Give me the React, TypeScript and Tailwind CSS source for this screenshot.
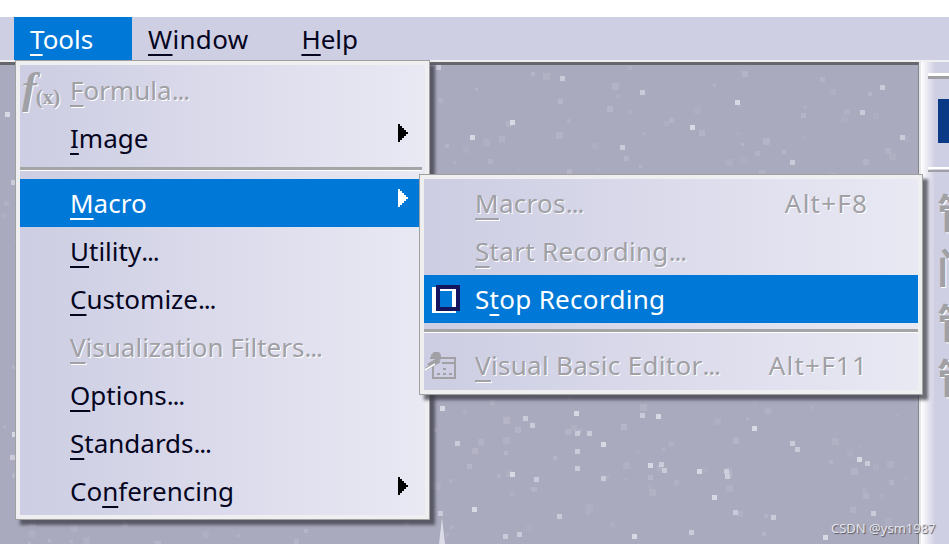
const FONT = "font-['Noto_Sans','Open_Sans',sans-serif]";
const DISABLED = "text-[#a0a0a5] [text-shadow:1px_1px_0_#ffffff]";

// hand picked from the reference, the rest of the speckle is seeded below
const BRIGHT_STARS = [
  [440, 406], [523, 416], [530, 423], [574, 411], [640, 413], [587, 431], [656, 414], [455, 441], [575, 431],
  [601, 442], [575, 449], [575, 466], [510, 472], [534, 477], [601, 476], [648, 463], [659, 462], [662, 468],
  [697, 469], [724, 469], [725, 474], [712, 495], [733, 510], [771, 515], [472, 507], [557, 514], [438, 511],
  [752, 426], [790, 441], [795, 447], [857, 457], [865, 461], [503, 534], [632, 534], [517, 532], [689, 530],
  [823, 535], [871, 511], [30, 105], [5, 112], [11, 180], [10, 455], [12, 432], [436, 65], [640, 90], [690, 125],
  [790, 160], [860, 110], [510, 120], [560, 76], [880, 85], [735, 100], [620, 145], [900, 135], [470, 135],
];

function makeSpeckle(count: number) {
  let seed = 1987;
  const next = () => {
    seed = (seed * 16807) % 2147483647;
    return seed / 2147483647;
  };
  return Array.from({ length: count }, () => ({
    x: Math.floor(next() * 918),
    y: Math.floor(next() * 480) + 65,
    w: 3 + Math.floor(next() * 5),
    o: 0.04 + next() * 0.1,
  }));
}

function Mnemonic({ text, at }: { text: string; at: number }) {
  const dots = text.endsWith("...");
  const body = dots ? text.slice(0, -3) : text;
  return (
    <>
      {body.slice(0, at)}
      <span className="underline decoration-2 underline-offset-[5px] [text-decoration-skip-ink:none]">{body[at]}</span>
      {body.slice(at + 1)}
      {dots && <span className="tracking-[-1.2px]">...</span>}
    </>
  );
}

function Arrow({ white }: { white?: boolean }) {
  return (
    <svg width="10" height="18" viewBox="0 0 10 18" className="absolute left-[378px] top-[10px]">
      <path d="M0 0h2v2h2v2h2v2h2v2h2v2h-2v2h-2v2h-2v2h-2v2h-2z" fill={white ? "#ffffff" : "#000000"} />
    </svg>
  );
}

function FormulaIcon() {
  return (
    <div className={`absolute left-[2px] top-[2px] flex items-end font-['Liberation_Serif',serif] italic font-bold ${DISABLED}`}>
      <span className="text-[44px] leading-[42px]">f</span>
      <span className="ml-[-1px] mb-[1px] text-[21px] leading-[24px] not-italic">(x)</span>
    </div>
  );
}

function StopIcon() {
  return (
    <svg width="30" height="30" viewBox="0 0 30 30" className="absolute left-[8px] top-[10px]">
      <rect x="2" y="4" width="20" height="22" fill="none" stroke="#ffffff" strokeWidth="4" />
      <rect x="6" y="2" width="20" height="22" fill="none" stroke="#14145f" strokeWidth="4" />
    </svg>
  );
}

function VbaIcon() {
  return (
    <svg width="34" height="34" viewBox="0 0 34 34" className="absolute left-0 top-[6px]">
      <path d="M7 11v-3l3-3h5l2 3v2" fill="#a0a0a5" />
      <path d="M6 11h25v20H9V19" fill="none" stroke="#a0a0a5" strokeWidth="2" />
      <path d="M4 18l12-7M2 22l14-8" stroke="#a0a0a5" strokeWidth="3" />
      <path d="M1 23l10-6" stroke="#ffffff" strokeWidth="1.5" />
      <path d="M18 16h12" stroke="#a0a0a5" strokeWidth="2" />
      <path d="M13 28h3v-2h-3zM19 28h3v-2h-3zM25 28h3v-2h-3zM19 23h3v-2h-3z" fill="#a0a0a5" />
    </svg>
  );
}

type Item = {
  label: string;
  at: number;
  disabled?: boolean;
  active?: boolean;
  arrow?: boolean;
  shortcut?: string;
  icon?: React.ReactNode;
};

function Row({ item, sub }: { item: Item; sub?: boolean }) {
  const tone = item.active ? "bg-[#0078d7] text-white" : item.disabled ? DISABLED : "text-[#05051f]";
  const inset = sub ? "pl-[51px] tracking-[0.3px]" : "pl-[50px]";
  return (
    <div className={`relative flex h-12 items-center justify-between pr-[50px] pb-[1px] ${inset} ${tone}`}>
      {item.icon}
      <span>
        <Mnemonic text={item.label} at={item.at} />
      </span>
      {item.shortcut && <span className="tracking-[1.2px]">{item.shortcut}</span>}
      {item.arrow && <Arrow white={item.active} />}
    </div>
  );
}

function Separator({ className }: { className: string }) {
  return (
    <div className={`flex items-start ${className}`}>
      <div className="h-[4px] w-full border-b border-white bg-[#a5a5a8]" />
    </div>
  );
}

function MenuBox({ className, children }: { className: string; children: React.ReactNode }) {
  return (
    <div className={`absolute border border-[#a0a0a0] shadow-[5px_5px_3px_rgba(60,60,72,0.75)] ${className}`}>
      <div className="h-full border-4 border-[#efeff1] bg-gradient-to-r from-[#cdcde3] to-[#e9e9f4] text-[26px] leading-none">
        {children}
      </div>
    </div>
  );
}

const topItems: Item[] = [
  { label: "Formula...", at: 0, disabled: true, icon: <FormulaIcon /> },
  { label: "Image", at: 0, arrow: true },
];
const mainItems: Item[] = [
  { label: "Macro", at: 0, active: true, arrow: true },
  { label: "Utility...", at: 0 },
  { label: "Customize...", at: 0 },
  { label: "Visualization Filters...", at: 0, disabled: true },
  { label: "Options...", at: 0 },
  { label: "Standards...", at: 0 },
  { label: "Conferencing", at: 2, arrow: true },
];
const macroItems: Item[] = [
  { label: "Macros...", at: 0, disabled: true, shortcut: "Alt+F8" },
  { label: "Start Recording...", at: 0, disabled: true },
  { label: "Stop Recording", at: 1, active: true, icon: <StopIcon /> },
];

export default function App() {
  const speckle = makeSpeckle(520);
  return (
    <div className={`relative flex h-[544px] w-[949px] flex-col overflow-hidden bg-white ${FONT}`}>
      <div className="h-[17px] shrink-0" />

      <div className="flex h-[43px] shrink-0 bg-[#cfcfe4] pl-[14px] text-[26px] leading-none text-[#05051f]">
        <div className="flex w-[118px] items-center bg-[#0078d7] pl-4 text-white">
          <span><Mnemonic text="Tools" at={0} /></span>
        </div>
        <div className="flex items-center pl-4 tracking-[0.3px]">
          <span><Mnemonic text="Window" at={0} /></span>
        </div>
        <div className="flex items-center pl-[53px]">
          <span><Mnemonic text="Help" at={0} /></span>
        </div>
      </div>

      <div className="flex min-h-0 flex-1 border-t-2 border-[#f0f0f2]">
        <div className="relative w-[919px] border-t-[3px] border-r border-t-[#66666e] border-r-[#85858f] bg-[#aaaabf]">
          <svg width="918" height="482" viewBox="0 65 918 482" className="absolute inset-0">
            {speckle.map((s, i) => (
              <rect key={i} x={s.x} y={s.y} width={s.w} height={s.w} fill="#ffffff" opacity={s.o} />
            ))}
            {BRIGHT_STARS.map(([x, y], i) => (
              <rect key={i} x={x} y={y} width="5" height="5" fill="#e4e4ee" opacity={i % 3 === 0 ? 0.8 : 0.55} />
            ))}
            <path d="M442 518l3 26h-6z" fill="#e8e8f2" opacity="0.8" />
          </svg>
        </div>

        <div className="relative flex-1 overflow-hidden border-l-2 border-[#e6e6e8] bg-gradient-to-r from-white to-[#cfcfe4] to-50%">
          <div className="ml-[7px] mt-[11px] h-[6px] border-t-[3px] border-b-[3px] border-t-white border-b-[#a0a0a4]" />
          <div className="ml-[17px] mt-[20px] h-[44px] bg-[#0a3a86]" />
          <div className="ml-[7px] mt-[24px] h-[5px] border-t-[2px] border-b-[2px] border-t-white border-b-[#a0a0a4]" />
          <div className={`ml-[16px] mt-[19px] flex w-[60px] flex-col gap-[15px] font-['Noto_Sans_CJK_SC',sans-serif] text-[40px] leading-[40px] font-bold ${DISABLED}`}>
            <span>管</span>
            <span>门</span>
            <span>管</span>
            <span>管</span>
          </div>
        </div>
      </div>

      <MenuBox className="left-[15px] top-[60px] h-[460px] w-[415px]">
        <div className="pt-[1px]">
          {topItems.map((item) => <Row key={item.label} item={item} />)}
        </div>
        <Separator className="h-[17px] pt-[5px] pr-[3px]" />
        {mainItems.map((item) => <Row key={item.label} item={item} />)}
      </MenuBox>

      <MenuBox className="left-[419px] top-[174px] h-[221px] w-[504px]">
        {macroItems.map((item) => <Row key={item.label} item={item} sub />)}
        <Separator className="h-[18px] pt-[6px]" />
        <Row sub item={{ label: "Visual Basic Editor...", at: 0, disabled: true, shortcut: "Alt+F11", icon: <VbaIcon /> }} />
      </MenuBox>

      <div className="absolute left-[831px] top-[519px] text-[13px] leading-[18px] text-[#e6e6ea] [text-shadow:1px_1px_1px_#55555f]">
        CSDN @ysm1987
      </div>
    </div>
  );
}
